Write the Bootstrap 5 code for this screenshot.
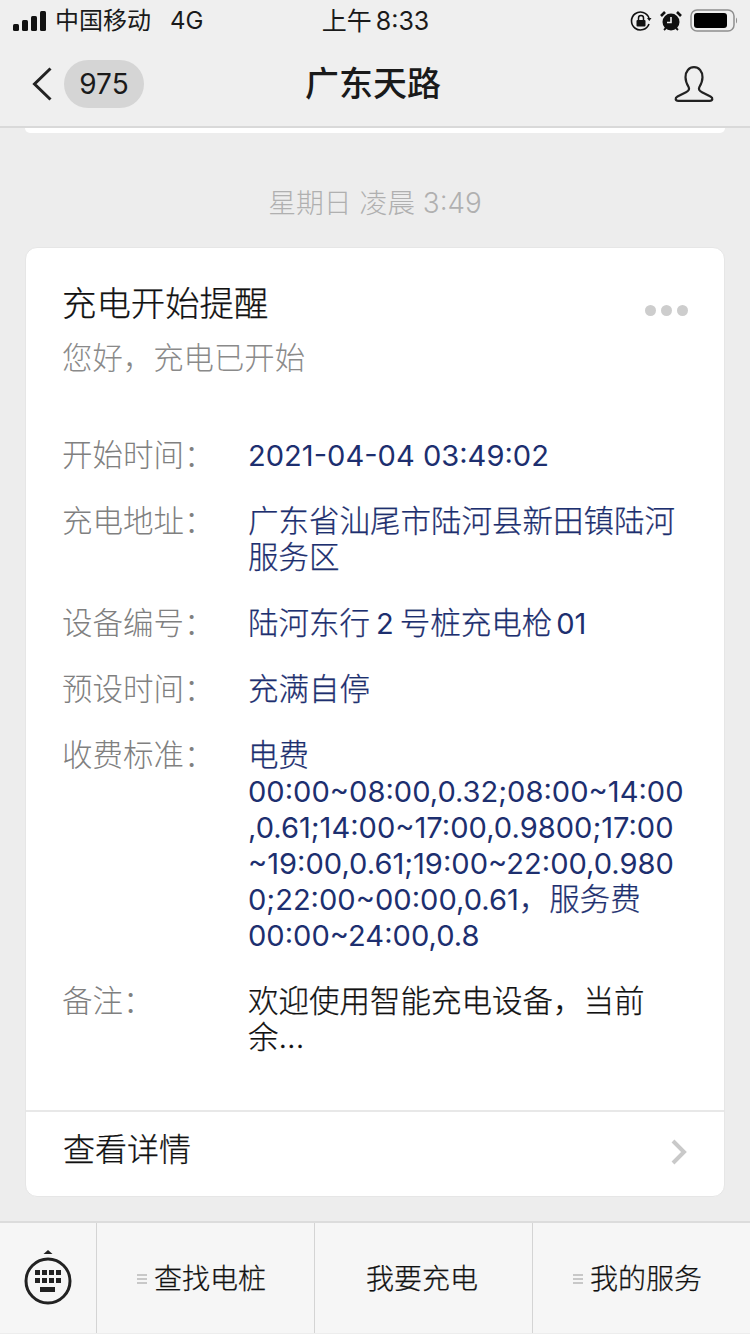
<!DOCTYPE html>
<html lang="zh-CN">
<head>
    <meta charset="UTF-8">
    <meta name="viewport" content="width=device-width, initial-scale=1.0">
    <title>广东天路</title>
    <link href="https://cdn.jsdelivr.net/npm/bootstrap@5.3.0/dist/css/bootstrap.min.css" rel="stylesheet">
    <style>
        html, body { margin: 0; height: 100%; }
        body {
            background-color: #ededed;
            font-family: Inter, "Noto Sans CJK SC", sans-serif;
            color: #1a1a1a;
            width: 750px;
            height: 1334px;
            overflow: hidden;
        }
        .phone-top { background-color: #efefef; border-bottom: 2px solid #d9d9d9; height: 128px; }
        .status-row { height: 42px; padding: 0 12px 0 13px; font-size: 24px; line-height: 42px; }
        .status-time { font-size: 25px; }
        .bar-slot { width: 33%; }
        .carrier-net { margin-left: 19px; }
        .nav-row { height: 84px; padding: 0 36px 0 32px; }
        .nav-side { width: 160px; }
        .unread-pill {
            background-color: #d5d5d5;
            border-radius: 24px;
            width: 80px;
            height: 48px;
            font-size: 28px;
            line-height: 48px;
            text-align: center;
            margin-left: 12px;
        }
        .nav-title { font-size: 34px; font-weight: 500; line-height: 44px; }
        .stub-card {
            height: 5px;
            margin: 0 25px;
            background-color: #fff;
            border-radius: 0 0 12px 12px;
        }
        .time-stamp { color: #b0b0b0; font-size: 27.8px; line-height: 40px; text-align: center; margin-top: 50px; height: 39px; font-weight: 300; }
        .msg-card {
            margin: 25px 25px 0;
            height: 950px;
            background-color: #fff;
            border: 1px solid #e6e6e6;
            border-radius: 12px;
        }
        .msg-head { padding: 35px 36px 0 36px; }
        .msg-title { font-size: 34.4px; line-height: 42px; font-weight: 300; color: #111; -webkit-text-stroke: 0.25px #111; }
        .msg-sub { font-size: 30.4px; line-height: 42px; color: #8a8a8a; margin-top: 12px; font-weight: 300; }
        .more-dots { gap: 5px; margin-top: 13px; }
        .more-dots i { display: block; width: 11px; height: 11px; border-radius: 50%; background-color: #cdcdcd; }
        .msg-rows { padding: 58px 36px 0 36px; height: 731px; }
        .info-row { margin-bottom: 30px; font-size: 30.5px; line-height: 36px; font-weight: 300; }
        .info-label { width: 186px; flex: none; color: #808080; }
        .info-value { color: #1d2f6f; white-space: nowrap; -webkit-text-stroke: 0.25px #1d2f6f; }
        .info-plain { color: #111; -webkit-text-stroke: 0.25px #111; }
        .num-text { font-size: 29.1px; line-height: 1; font-weight: 400; -webkit-text-stroke: 0; }
        .num-gap { margin: 0 6px; }
        .msg-foot { border-top: 2px solid #e8e8e8; height: 83px; padding: 0 36px 5px 37px; font-size: 32px; font-weight: 300; color: #111; -webkit-text-stroke: 0.25px #111; }
        .foot-arrow { margin-top: 4px; }
        .tab-bar {
            margin-top: 24px;
            height: 112px;
            background-color: #f6f6f6;
            border-top: 2px solid #dcdcdc;
            font-size: 28px;
            font-weight: 300;
        }
        .tab-key { width: 96px; flex: none; }
        .tab-item { width: 218px; flex: none; border-left: 1px solid #d4d4d4; color: #111; padding: 2px 8px 0 0; -webkit-text-stroke: 0.25px #111; }
        .tab-mid { padding-right: 3px; }
        .tab-burger { width: 10px; height: 10px; margin-right: 7px; flex: none; }
    </style>
</head>
<body>
    <div class="phone-top">
        <div class="status-row d-flex align-items-center">
            <div class="bar-slot d-flex align-items-center">
                <svg width="34" height="22" viewBox="0 0 34 22" class="me-2">
                    <rect x="0" y="14" width="6" height="7" rx="1.5" fill="#111"/>
                    <rect x="9" y="10" width="6" height="11" rx="1.5" fill="#111"/>
                    <rect x="18" y="6" width="6" height="15" rx="1.5" fill="#111"/>
                    <rect x="27" y="1" width="6" height="20" rx="1.5" fill="#111"/>
                </svg>
                <span>中国移动</span>
                <span class="carrier-net">4G</span>
            </div>
            <div class="flex-grow-1 text-center status-time">上午<span class="ms-1">8:33</span></div>
            <div class="bar-slot d-flex align-items-center justify-content-end">
                <svg width="22" height="22" viewBox="0 0 22 22" class="me-2">
                    <path d="M19 14a9 9 0 1 1 0-6" fill="none" stroke="#111" stroke-width="1.6"/>
                    <path d="M17 8l4.5 0-2.2 3z" fill="#111"/>
                    <rect x="6.500" y="10" width="9" height="6.500" rx="1" fill="#111"/>
                    <path d="M8.500 10V8a2.500 2.500 0 0 1 5 0v2" fill="none" stroke="#111" stroke-width="1.500"/>
                </svg>
                <svg width="22" height="22" viewBox="0 0 22 22" class="me-2">
                    <circle cx="11" cy="12" r="8.500" fill="#111"/>
                    <path d="M11 7v5.500H7" fill="none" stroke="#efefef" stroke-width="1.600"/>
                    <path d="M1 6l4-4M21 6l-4-4" stroke="#111" stroke-width="2.600"/>
                    <path d="M4 20l2-2M18 20l-2-2" stroke="#111" stroke-width="1.800"/>
                </svg>
                <svg width="48" height="24" viewBox="0 0 48 24">
                    <rect x="1" y="1" width="43" height="21" rx="6" fill="none" stroke="#8f8f8f" stroke-width="1.500"/>
                    <rect x="4" y="4" width="33" height="15" rx="3" fill="#000"/>
                    <path d="M46 8.500c1.400.6 1.400 5.400 0 6z" fill="#8f8f8f"/>
                </svg>
            </div>
        </div>
        <div class="nav-row d-flex align-items-center justify-content-between">
            <div class="nav-side d-flex align-items-center">
                <svg width="20" height="34" viewBox="0 0 20 34">
                    <path d="M18.500 1.500 2.500 17l16 15.500" fill="none" stroke="#222" stroke-width="3"/>
                </svg>
                <div class="unread-pill">975</div>
            </div>
            <div class="nav-title">广东天路</div>
            <div class="nav-side d-flex justify-content-end">
                <svg width="40" height="36" viewBox="0 0 40 36">
                    <path d="M20 1.200c-5 0-8.500 4.300-8.500 10 0 4.300 1.800 7.600 3.200 10 1 2.200-.3 3.800-2.700 5L3.500 30.500c-2.800 1.500-2.300 4.300.8 4.300h31.400c3.100 0 3.600-2.800.8-4.300L28 26.200c-2.400-1.200-3.700-2.800-2.700-5 1.400-2.400 3.200-5.700 3.200-10 0-5.700-3.500-10-8.500-10z" fill="none" stroke="#222" stroke-width="2.200"/>
                </svg>
            </div>
        </div>
    </div>

    <div class="stub-card"></div>
    <div class="time-stamp">星期日 凌晨 3:49</div>

    <div class="msg-card d-flex flex-column">
        <div class="msg-head">
            <div class="d-flex justify-content-between align-items-center">
                <div class="msg-title">充电开始提醒</div>
                <div class="more-dots d-flex"><i></i><i></i><i></i></div>
            </div>
            <div class="msg-sub">您好，充电已开始</div>
        </div>
        <div class="msg-rows">
            <div class="info-row d-flex"><div class="info-label">开始时间：</div><div class="info-value"><span class="num-text">2021-04-04 03:49:02</span></div></div>
            <div class="info-row d-flex"><div class="info-label">充电地址：</div><div class="info-value">广东省汕尾市陆河县新田镇陆河<br>服务区</div></div>
            <div class="info-row d-flex"><div class="info-label">设备编号：</div><div class="info-value">陆河东行<span class="num-text num-gap">2</span>号桩充电枪<span class="num-text ms-1">01</span></div></div>
            <div class="info-row d-flex"><div class="info-label">预设时间：</div><div class="info-value">充满自停</div></div>
            <div class="info-row d-flex"><div class="info-label">收费标准：</div><div class="info-value">电费<br><span class="num-text">00:00~08:00,0.32;08:00~14:00<br>,0.61;14:00~17:00,0.9800;17:00<br>~19:00,0.61;19:00~22:00,0.980<br>0;22:00~00:00,0.61</span>，服务费<br><span class="num-text">00:00~24:00,0.8</span></div></div>
            <div class="info-row d-flex"><div class="info-label">备注：</div><div class="info-value info-plain">欢迎使用智能充电设备，当前<br>余...</div></div>
        </div>
        <div class="msg-foot d-flex align-items-center justify-content-between">
            <span>查看详情</span>
            <svg class="foot-arrow" width="18" height="26" viewBox="0 0 18 26"><path d="M3 2l11 11L3 24" fill="none" stroke="#c9c9c9" stroke-width="4"/></svg>
        </div>
    </div>

    <div class="tab-bar d-flex">
        <div class="tab-key d-flex align-items-center justify-content-center">
            <svg width="48" height="56" viewBox="0 0 48 56">
                <path d="M24 0l4.500 4h-9z" fill="#222"/>
                <circle cx="24" cy="31" r="22" fill="none" stroke="#222" stroke-width="3"/>
                <g fill="#222">
                    <rect x="11" y="20" width="5" height="5"/><rect x="18" y="20" width="5" height="5"/><rect x="25" y="20" width="5" height="5"/><rect x="32" y="20" width="5" height="5"/>
                    <rect x="11" y="28" width="5" height="5"/><rect x="18" y="28" width="5" height="5"/><rect x="25" y="28" width="5" height="5"/><rect x="32" y="28" width="5" height="5"/>
                    <rect x="16" y="37" width="15" height="5"/>
                </g>
            </svg>
        </div>
        <div class="tab-item d-flex align-items-center justify-content-center">
            <svg class="tab-burger" viewBox="0 0 10 10"><path d="M0 1h10M0 5h10M0 9h10" stroke="#9a9a9a" stroke-width="1"/></svg>
            <span>查找电桩</span>
        </div>
        <div class="tab-item tab-mid d-flex align-items-center justify-content-center"><span>我要充电</span></div>
        <div class="tab-item d-flex align-items-center justify-content-center">
            <svg class="tab-burger" viewBox="0 0 10 10"><path d="M0 1h10M0 5h10M0 9h10" stroke="#9a9a9a" stroke-width="1"/></svg>
            <span>我的服务</span>
        </div>
    </div>

    <script src="https://cdn.jsdelivr.net/npm/bootstrap@5.3.0/dist/js/bootstrap.bundle.min.js"></script>
</body>
</html>
